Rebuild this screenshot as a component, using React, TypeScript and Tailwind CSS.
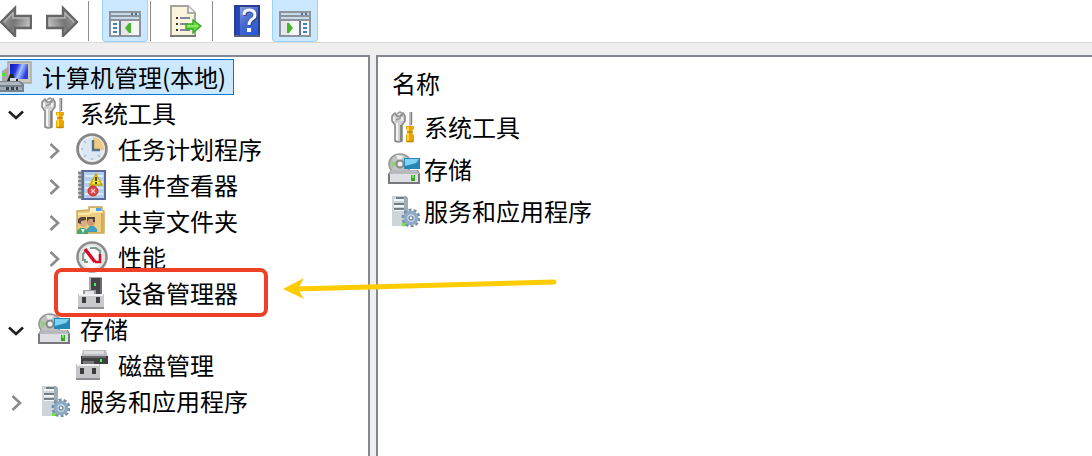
import React from 'react';

type IconType = () => React.ReactElement;

interface TreeNode {
    label: string;
    icon: IconType;
    state: 'open' | 'closed' | 'leaf';
    marked?: boolean;
    children?: TreeNode[];
}

const tree: TreeNode[] = [
    {
        label: '系统工具',
        icon: ToolsIcon,
        state: 'open',
        children: [
            { label: '任务计划程序', icon: ClockIcon, state: 'closed' },
            { label: '事件查看器', icon: EventIcon, state: 'closed' },
            { label: '共享文件夹', icon: FolderIcon, state: 'closed' },
            { label: '性能', icon: PerformanceIcon, state: 'closed' },
            { label: '设备管理器', icon: DeviceIcon, state: 'leaf', marked: true },
        ],
    },
    {
        label: '存储',
        icon: StorageIcon,
        state: 'open',
        children: [{ label: '磁盘管理', icon: DiskIcon, state: 'leaf' }],
    },
    { label: '服务和应用程序', icon: ServicesIcon, state: 'closed' },
];

export default function App() {
    return (
        <div className="flex min-h-screen flex-col bg-[#efefef] font-['Noto_Sans_CJK_SC',sans-serif] text-2xl text-black">
            <Toolbar />
            <main className="mt-3 flex flex-1 items-stretch">
                <ConsoleTree />
                <DetailList />
            </main>
        </div>
    );
}

function Toolbar() {
    return (
        <header className="flex h-[43px] items-center border-b border-[#dadada] bg-white">
            <button type="button" aria-label="后退" className="shrink-0">
                <ArrowIcon />
            </button>
            <button type="button" aria-label="前进" className="ml-3.5 shrink-0 -scale-x-100">
                <ArrowIcon />
            </button>
            <Separator className="ml-2.5" />
            <button type="button" aria-label="显示/隐藏控制台树" className="ml-[13px] flex h-full w-[46px] shrink-0 items-center justify-center rounded-b border border-t-0 border-[#99d1ff] bg-[#cce8ff] pt-1.5">
                <ConsoleIcon side="left" />
            </button>
            <Separator className="ml-0.5" />
            <button type="button" aria-label="导出列表" className="ml-[19px] shrink-0">
                <ExportIcon />
            </button>
            <Separator className="ml-2.5" />
            <button type="button" aria-label="帮助" className="ml-[21px] shrink-0">
                <HelpIcon />
            </button>
            <button type="button" aria-label="显示/隐藏操作窗格" className="ml-3 flex h-full w-[46px] shrink-0 items-center justify-center rounded-b border border-t-0 border-[#99d1ff] bg-[#cce8ff] pt-1.5">
                <ConsoleIcon side="right" />
            </button>
        </header>
    );
}

function Separator({ className }: { className: string }) {
    return <div className={`h-10 w-px shrink-0 bg-[#8c8c8c] ${className}`} />;
}

/* Left pane */
function ConsoleTree() {
    return (
        <nav className="w-[370px] shrink-0 border-t-2 border-r-2 border-[#828790] bg-white pt-0.5">
            <a href="#" className="flex h-9 w-[234px] items-center gap-2.5 border border-l-0 border-[#0078d7] bg-[#cce8ff] whitespace-nowrap">
                <ComputerIcon />
                计算机管理(本地)
            </a>
            <ul>
                {tree.map((node) => (
                    <TreeItem key={node.label} node={node} />
                ))}
            </ul>
        </nav>
    );
}

function TreeItem({ node }: { node: TreeNode }) {
    const Icon = node.icon;
    return (
        <li>
            <div className="relative flex h-9 items-center">
                {node.state === 'leaf' ? (
                    <span className="w-8" />
                ) : (
                    <button type="button" aria-label={node.label} className="flex w-8 justify-center pt-1">
                        <Chevron open={node.state === 'open'} />
                    </button>
                )}
                <a href="#" className="ml-1.5 flex items-center gap-2.5 whitespace-nowrap">
                    <Icon />
                    {node.label}
                </a>
                {node.marked && <Callout />}
            </div>
            {node.children && (
                <ul className="pl-[38px]">
                    {node.children.map((child) => (
                        <TreeItem key={child.label} node={child} />
                    ))}
                </ul>
            )}
        </li>
    );
}

/* Red frame and arrow drawn over the row */
function Callout() {
    return (
        <div className="pointer-events-none absolute -top-[7px] left-4 z-10 h-[49px] w-[214px] rounded-lg border-4 border-[#ee4027]">
            <svg className="absolute top-1.5 left-56" width="276" height="24" viewBox="0 0 276 24">
                <path d="M12 11 L272 4" stroke="#ffcc00" strokeWidth="5" strokeLinecap="round" />
                <path d="M1 11 L22 0 L16 11 L22 21 Z" fill="#ffcc00" />
            </svg>
        </div>
    );
}

function Chevron({ open }: { open: boolean }) {
    return open ? (
        <svg width="16" height="16" viewBox="0 0 16 16" fill="none" stroke="#1f1f1f" strokeWidth="2.6">
            <path d="M1 4.5 L8 11 L15 4.5" />
        </svg>
    ) : (
        <svg width="16" height="16" viewBox="0 0 16 16" fill="none" stroke="#8b8b8b" strokeWidth="2.6">
            <path d="M4.5 1 L12 8 L4.5 15" />
        </svg>
    );
}

/* Right pane */
function DetailList() {
    return (
        <section className="ml-1.5 min-w-0 flex-1 border-t-2 border-l-2 border-[#828790] bg-white">
            <table className="w-full">
                <thead>
                    <tr className="h-[49px]">
                        <th className="pt-0.5 pl-3.5 text-left font-normal">名称</th>
                    </tr>
                </thead>
                <tbody>
                    {tree.map(({ label, icon: Icon }) => (
                        <tr key={label} className="h-[42px]">
                            <td className="pl-2.5">
                                <a href="#" className="flex items-center gap-1">
                                    <Icon />
                                    {label}
                                </a>
                            </td>
                        </tr>
                    ))}
                </tbody>
            </table>
        </section>
    );
}

/* Icons */
function Svg({ children }: { children: React.ReactNode }) {
    return (
        <svg className="shrink-0" width="32" height="32" viewBox="0 0 32 32" fill="none">
            {children}
        </svg>
    );
}

function ArrowIcon() {
    return (
        <Svg>
            <defs>
                <linearGradient id="arrow" x1="0" y1="0" x2="1" y2="0.4">
                    <stop offset="0" stopColor="#a9a9a9" />
                    <stop offset="0.55" stopColor="#767676" />
                    <stop offset="1" stopColor="#bdbdbd" />
                </linearGradient>
            </defs>
            <path d="M1 17 L15 3 V11 H31 V23 H15 V31 Z" fill="url(#arrow)" stroke="#666" strokeWidth="2.4" />
            <path d="M4 17 L13 8 V13 H29" stroke="#b4b4b4" strokeWidth="1.4" />
        </Svg>
    );
}

function ConsoleIcon({ side }: { side: 'left' | 'right' }) {
    const left = side === 'left';
    const dash = left ? 4 : 24;
    return (
        <svg width="32" height="26" viewBox="0 0 32 26">
            <path d="M0 0H32V26H0Z" fill="#8b939c" />
            <path d="M2 2H30V4H2ZM2 6H30V8H2Z" fill="#c8d9e8" />
            <path d="M22 2H24V4H22ZM26 2H28V4H26Z" fill="#4a6d96" />
            <path d="M2 10H30V24H2Z" fill="#f5f6f7" />
            <path d={left ? 'M12 10H20V24H12Z' : 'M2 10H11V24H2Z'} fill="#e6e7e8" />
            <path d={left ? 'M10 10H12V24H10Z' : 'M20 10H22V24H20Z'} fill="#66788f" />
            <g fill="#477fb8">
                <rect x={dash} y="12" width="4" height="2" />
                <rect x={dash} y="16" width="4" height="2" />
                <rect x={dash} y="20" width="4" height="2" />
            </g>
            <path d={left ? 'M22 12V22H20L16 17L20 12Z' : 'M8 12V22H10L14 17L10 12Z'} fill="#45b52c" />
        </svg>
    );
}

function ExportIcon() {
    return (
        <Svg>
            <path d="M1 1H18L25 8V31H1Z" fill="#fbf4dc" stroke="#a3a3a0" strokeWidth="2" />
            <path d="M0 31H26" stroke="#787878" strokeWidth="2" />
            <path d="M18 1V8H25" fill="#f4f4f4" stroke="#a9abad" strokeWidth="2" />
            <path d="M6 12H8V14H6ZM6 18H8V20H6ZM6 24H8V26H6Z" fill="#333" />
            <path d="M10 13H20M10 19H18M10 25H20" stroke="#8a829c" strokeWidth="2" />
            <path d="M16 19H23V15L31 21L23 28V24H16Z" fill="#67d83f" stroke="#38a928" strokeWidth="1.4" />
            <path d="M17 21H28" stroke="#9cef71" strokeWidth="1.6" />
        </Svg>
    );
}

function HelpIcon() {
    return (
        <svg width="26" height="32" viewBox="0 0 26 32">
            <defs>
                <linearGradient id="help" x1="0" y1="0" x2="0.6" y2="1">
                    <stop offset="0" stopColor="#8b9ee0" />
                    <stop offset="0.5" stopColor="#4a6bd0" />
                    <stop offset="1" stopColor="#2d5bd6" />
                </linearGradient>
            </defs>
            <rect width="26" height="32" fill="#2b3d8f" />
            <rect x="2" y="2" width="4" height="28" fill="#2646ba" />
            <rect x="6" y="2" width="18" height="28" fill="url(#help)" />
            <rect y="30" width="26" height="2" fill="#596078" />
            <path d="M10 10 Q10 5 15 5 Q21 5 21 10 Q21 13 17 15 Q15 17 15 20" transform="translate(1 1)" fill="none" stroke="#344787" strokeWidth="3" />
            <path d="M10 10 Q10 5 15 5 Q21 5 21 10 Q21 13 17 15 Q15 17 15 20" fill="none" stroke="#f4f6fb" strokeWidth="3" />
            <rect x="13" y="23" width="4" height="4" fill="#fff" />
        </svg>
    );
}

function ComputerIcon() {
    return (
        <Svg>
            <defs>
                <linearGradient id="screen" x1="0" y1="0" x2="1" y2="0.35">
                    <stop offset="0" stopColor="#0b18b8" />
                    <stop offset="0.4" stopColor="#2738dc" />
                    <stop offset="0.65" stopColor="#a8c3ff" />
                    <stop offset="1" stopColor="#233ce0" />
                </linearGradient>
            </defs>
            <path d="M2 10L8 6V20H2Z" fill="#a8a8a8" />
            <path d="M2 12H6V15H2Z" fill="#55e02e" />
            <path d="M8 1H31V22H8Z" fill="#cbc8bd" stroke="#aaa79d" strokeWidth="1.4" />
            <path d="M10 3H28V18H10Z" fill="url(#screen)" />
            <path d="M7 20L10 13H13L15 18H18V21H7Z" fill="#242424" />
            <path d="M10 17H16V20H10Z" fill="#d6dbdd" />
            <path d="M0 20H20L24 23V31H0Z" fill="#75828c" />
            <path d="M0 21H19L22 24H0Z" fill="#aeb9bf" />
            <path d="M0 26H22V29H0Z" fill="#9eabb3" />
            <path d="M6 26H9V29H6ZM11 26H14V29H11ZM16 26H18V29H16Z" fill="#33424d" />
        </Svg>
    );
}

function ToolsIcon() {
    return (
        <Svg>
            <path d="M7 2L4 5V10L7 14V30Q10 32 14 30V14L17 10V5L15 2L12 5L9 5Z" fill="#cfcfcf" stroke="#8a8a8a" strokeWidth="1.6" />
            <path d="M9 3L12 1L15 3L12 7L8 9" stroke="#9b9b9b" strokeWidth="1.6" />
            <path d="M9 12V29" stroke="#f5f5f5" strokeWidth="2" />
            <path d="M13 14V30" stroke="#7b7b7b" strokeWidth="1.6" />
            <path d="M6 6V10M14 6V10" stroke="#f0f0f0" strokeWidth="2" />
            <path d="M22 1V15" stroke="#c4c4c4" strokeWidth="2" />
            <path d="M23.5 1V14" stroke="#7d7d7d" strokeWidth="1.4" />
            <path d="M18 15H26V18L24 20V22L26 24V31H18V24L20 22V20L18 18Z" fill="#eba500" />
            <path d="M20 16V30" stroke="#ffd84a" strokeWidth="2" />
            <path d="M19 21H25M19 30.5H25" stroke="#c28500" strokeWidth="1.4" />
        </Svg>
    );
}

function ClockIcon() {
    return (
        <Svg>
            <circle cx="16" cy="16" r="14.5" fill="#c5c7ca" stroke="#858585" strokeWidth="2.6" />
            <circle cx="16" cy="16" r="12" fill="#d9e8f4" stroke="#eef1f3" strokeWidth="1.6" />
            <path d="M17 4A12 12 0 0 1 28 17H17Z" fill="#efcb83" />
            <path d="M17 7V17H24" stroke="#587087" strokeWidth="2.4" />
            <path d="M16 25V27M5 16H7M8 8L10 10M8 24L10 22M24 24L22 22" stroke="#a9bccb" strokeWidth="1.6" />
        </Svg>
    );
}

function EventIcon() {
    return (
        <Svg>
            <rect x="5" y="1" width="25" height="30" fill="#5969a1" />
            <rect x="8" y="3" width="20" height="26" fill="#b4cde8" />
            <path d="M9 7H27M9 13H27M9 19H27M9 25H27" stroke="#dceaf8" strokeWidth="2" />
            <path d="M4 2V30" stroke="#b5b5b5" strokeWidth="3" />
            <path d="M2 4H8M2 8H8M2 12H8M2 16H8M2 20H8M2 24H8M2 28H8" stroke="#737373" strokeWidth="1.6" />
            <path d="M20 5L26 16H14Z" fill="#f5dc22" stroke="#c4a800" strokeWidth="1.4" />
            <path d="M20 8V12M20 13V15" stroke="#444" strokeWidth="2" />
            <circle cx="17" cy="22" r="5" fill="#dc4242" stroke="#c53030" strokeWidth="1" />
            <path d="M15 20L19 24M19 20L15 24" stroke="#f8cccc" strokeWidth="1.4" />
        </Svg>
    );
}

function FolderIcon() {
    return (
        <Svg>
            <path d="M1 6L13 5V2H26V6H28V28H1Z" fill="#edce80" stroke="#c9a758" strokeWidth="1.4" />
            <path d="M14 3H25V7H14Z" fill="#f9edc2" />
            <path d="M20 3H25V6H20Z" fill="#4aa3ec" />
            <path d="M2 9H13L15 7H27" stroke="#fff0b8" strokeWidth="1.6" />
            <path d="M26 8V27" stroke="#d3ac55" strokeWidth="2" />
            <path d="M11 27V24L14 21H18L21 24V27Z" fill="#459cc0" />
            <circle cx="15" cy="17" r="4" fill="#c99a70" />
            <path d="M11 17V12H19V17H17V14H13Z" fill="#4c4238" />
            <path d="M1 29V26L4 23H9L12 26V29Z" fill="#45a775" />
            <circle cx="7" cy="18" r="4" fill="#dbad80" />
            <path d="M2 18V14L5 12H10V15L5 16V19Z" fill="#57473a" />
            <path d="M5 24L7 28L9 24" fill="#dffaed" />
        </Svg>
    );
}

function PerformanceIcon() {
    return (
        <Svg>
            <circle cx="16" cy="16" r="14.5" fill="#fafafa" stroke="#8c8c8c" strokeWidth="2.6" />
            <circle cx="16" cy="16" r="12" stroke="#e2e2e2" strokeWidth="2" />
            <path d="M7 20V13L10 9M14 7H20L24 10V13" stroke="#7f9a8b" strokeWidth="2.2" />
            <path d="M9 8L19 21" stroke="#d80a26" strokeWidth="3.4" />
            <path d="M24 13V21H19" stroke="#d80a26" strokeWidth="2.6" />
            <path d="M9 18V21H12" stroke="#7f9a8b" strokeWidth="2" />
        </Svg>
    );
}

function DeviceIcon() {
    return (
        <Svg>
            <path d="M13 0H26V19H13Z" fill="#aaa9ae" />
            <path d="M15 1H26V17H15Z" fill="#454549" />
            <path d="M24 1H26V17H24Z" fill="#6c6c70" />
            <path d="M18 6H20V9H18Z" fill="#43f452" />
            <path d="M7 13H20V18H7Z" fill="#9c9ba0" />
            <path d="M9 14H18V17H9Z" fill="#e3e2e6" />
            <path d="M2 17H28V32H2Z" fill="#c9c8cd" />
            <path d="M3 18H27" stroke="#efeff2" strokeWidth="2" />
            <path d="M2 31H28" stroke="#8f8e95" strokeWidth="2" />
            <path d="M6 20H10V26H6ZM20 20H24V26H20Z" fill="#3c3c3f" />
        </Svg>
    );
}

function StorageIcon() {
    return (
        <Svg>
            <ellipse cx="12" cy="11" rx="11" ry="10" fill="#c1c3c3" stroke="#969999" strokeWidth="1.6" />
            <path d="M2 8L9 10L4 15Z" fill="#8fd07c" />
            <path d="M8 2L11 9L16 3Z" fill="#eeeeef" />
            <circle cx="12" cy="11" r="3.5" fill="#eee" stroke="#888" strokeWidth="2" />
            <path d="M16 5H32V16H16Z" fill="#2786b3" />
            <path d="M17 6H31L28 10L17 13Z" fill="#7ed2f3" />
            <path d="M3 17H30L32 21V31H0V21Z" fill="#77777c" />
            <path d="M3 17H29L31 21H1Z" fill="#b8b9bf" />
            <path d="M2 21H30V29H2Z" fill="#dedee5" />
            <path d="M23 22H27V28H23Z" fill="#36a425" />
            <path d="M24 22H26V25H24Z" fill="#65f24c" />
        </Svg>
    );
}

function DiskIcon() {
    return (
        <Svg>
            <path d="M7 1H30L32 8H5Z" fill="#bebdc2" />
            <path d="M8 2H28V5H8Z" fill="#dddce0" />
            <path d="M5 7H32V15H5Z" fill="#3f3f43" />
            <path d="M6 8H30" stroke="#68686c" strokeWidth="2" />
            <path d="M24 10H26V13H24Z" fill="#46f659" />
            <path d="M7 12H18V17H7Z" fill="#78787c" />
            <path d="M0 15H24V31H0Z" fill="#c6c5ca" />
            <path d="M1 16H23" stroke="#efeff2" strokeWidth="2" />
            <path d="M0 30H24" stroke="#8f8e95" strokeWidth="2" />
            <path d="M4 19H8V25H4ZM16 19H20V25H16Z" fill="#3c3c3f" />
        </Svg>
    );
}

function ServicesIcon() {
    return (
        <Svg>
            <path d="M4 1H18L20 3V31H4Z" fill="#9fadb5" />
            <path d="M4 1H16V31H4Z" fill="#ccd6da" />
            <path d="M6 5H16M6 11H16M6 15H16" stroke="#f3f6f7" strokeWidth="2" />
            <path d="M8 3H16M6 9H16M6 14H16" stroke="#50616a" strokeWidth="1.6" />
            <path d="M14 28H18V31H14Z" fill="#72e646" />
            <circle cx="23" cy="23" r="8" stroke="#7590a8" strokeWidth="3" strokeDasharray="3 2" />
            <circle cx="23" cy="23" r="5.5" fill="#d8e5ef" stroke="#8faac3" strokeWidth="3.6" />
            <circle cx="23" cy="23" r="2" fill="#fff" stroke="#60798f" strokeWidth="1.2" />
        </Svg>
    );
}
